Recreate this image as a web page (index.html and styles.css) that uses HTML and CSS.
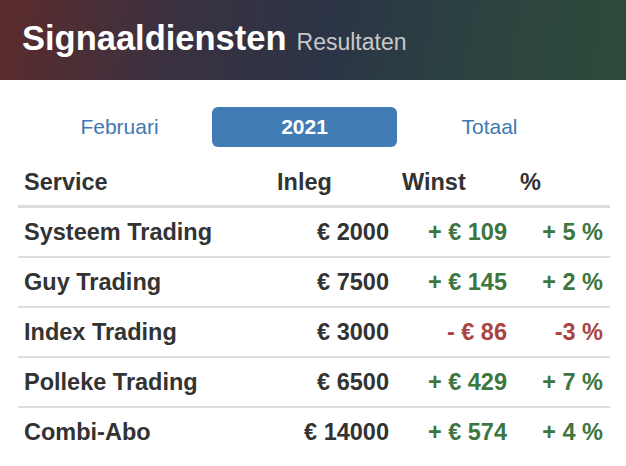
FILE: index.html
```html
<!DOCTYPE html>
<html lang="nl">
<head>
<meta charset="utf-8">
<title>Signaaldiensten Resultaten</title>
<link rel="stylesheet" href="styles.css">
</head>
<body>
<header class="banner">
  <h1 class="title">Signaaldiensten</h1>
  <span class="subtitle">Resultaten</span>
</header>
<nav class="tabs">
  <a class="tab">Februari</a>
  <a class="tab active">2021</a>
  <a class="tab">Totaal</a>
</nav>
<table class="results">
  <colgroup>
    <col class="c-service"><col class="c-inleg"><col class="c-winst"><col class="c-pct">
  </colgroup>
  <thead>
    <tr><th>Service</th><th>Inleg</th><th>Winst</th><th>%</th></tr>
  </thead>
  <tbody>
    <tr><td>Systeem Trading</td><td class="num">€ 2000</td><td class="num pos">+ € 109</td><td class="num pos">+ 5 %</td></tr>
    <tr><td>Guy Trading</td><td class="num">€ 7500</td><td class="num pos">+ € 145</td><td class="num pos">+ 2 %</td></tr>
    <tr><td>Index Trading</td><td class="num">€ 3000</td><td class="num neg">- € 86</td><td class="num neg">-3 %</td></tr>
    <tr><td>Polleke Trading</td><td class="num">€ 6500</td><td class="num pos">+ € 429</td><td class="num pos">+ 7 %</td></tr>
    <tr><td>Combi-Abo</td><td class="num">€ 14000</td><td class="num pos">+ € 574</td><td class="num pos">+ 4 %</td></tr>
  </tbody>
</table>
</body>
</html>
```
FILE: styles.css
```css
html, body {
  margin: 0;
  padding: 0;
  background: #ffffff;
  font-family: "Liberation Sans", Arial, sans-serif;
  color: #333333;
}

.banner {
  height: 80px;
  box-sizing: border-box;
  padding: 16px 0 0 22px;
  display: flex;
  align-items: baseline;
  background: linear-gradient(100deg, #5c2b2c 0%, #3a3140 28%, #2b3446 52%, #2c4440 78%, #2d4b3a 100%);
}

.title {
  margin: 0;
  font-size: 34.5px;
  line-height: 44px;
  font-weight: bold;
  color: #ffffff;
}

.subtitle {
  margin-left: 10px;
  font-size: 23px;
  color: #c9c9c9;
}

.tabs {
  display: flex;
  margin-top: 27px;
  padding-left: 27px;
}

.tab {
  width: 185px;
  height: 40px;
  display: flex;
  align-items: center;
  justify-content: center;
  font-size: 21px;
  color: #3e79b3;
  border-radius: 6px;
}

.tab.active {
  background: #427cb4;
  color: #ffffff;
  font-weight: bold;
}

.results {
  margin: 12px 0 0 18px;
  width: 592px;
  border-collapse: collapse;
  table-layout: fixed;
  font-size: 23.5px;
  font-weight: bold;
}

.c-service { width: 253px; }
.c-inleg { width: 125px; }
.c-winst { width: 118px; }
.c-pct { width: 96px; }

.results th {
  text-align: left;
  padding: 9px 6px;
  line-height: 28px;
  border-bottom: 3px solid #dddddd;
}

.results td {
  padding: 10px 7px 10px 6px;
  line-height: 28px;
  border-top: 2px solid #dddddd;
  white-space: nowrap;
}

.results tbody tr:first-child td {
  border-top: 0;
}

.results td.num {
  text-align: right;
}

.pos { color: #3d763e; }
.neg { color: #a94442; }
```
